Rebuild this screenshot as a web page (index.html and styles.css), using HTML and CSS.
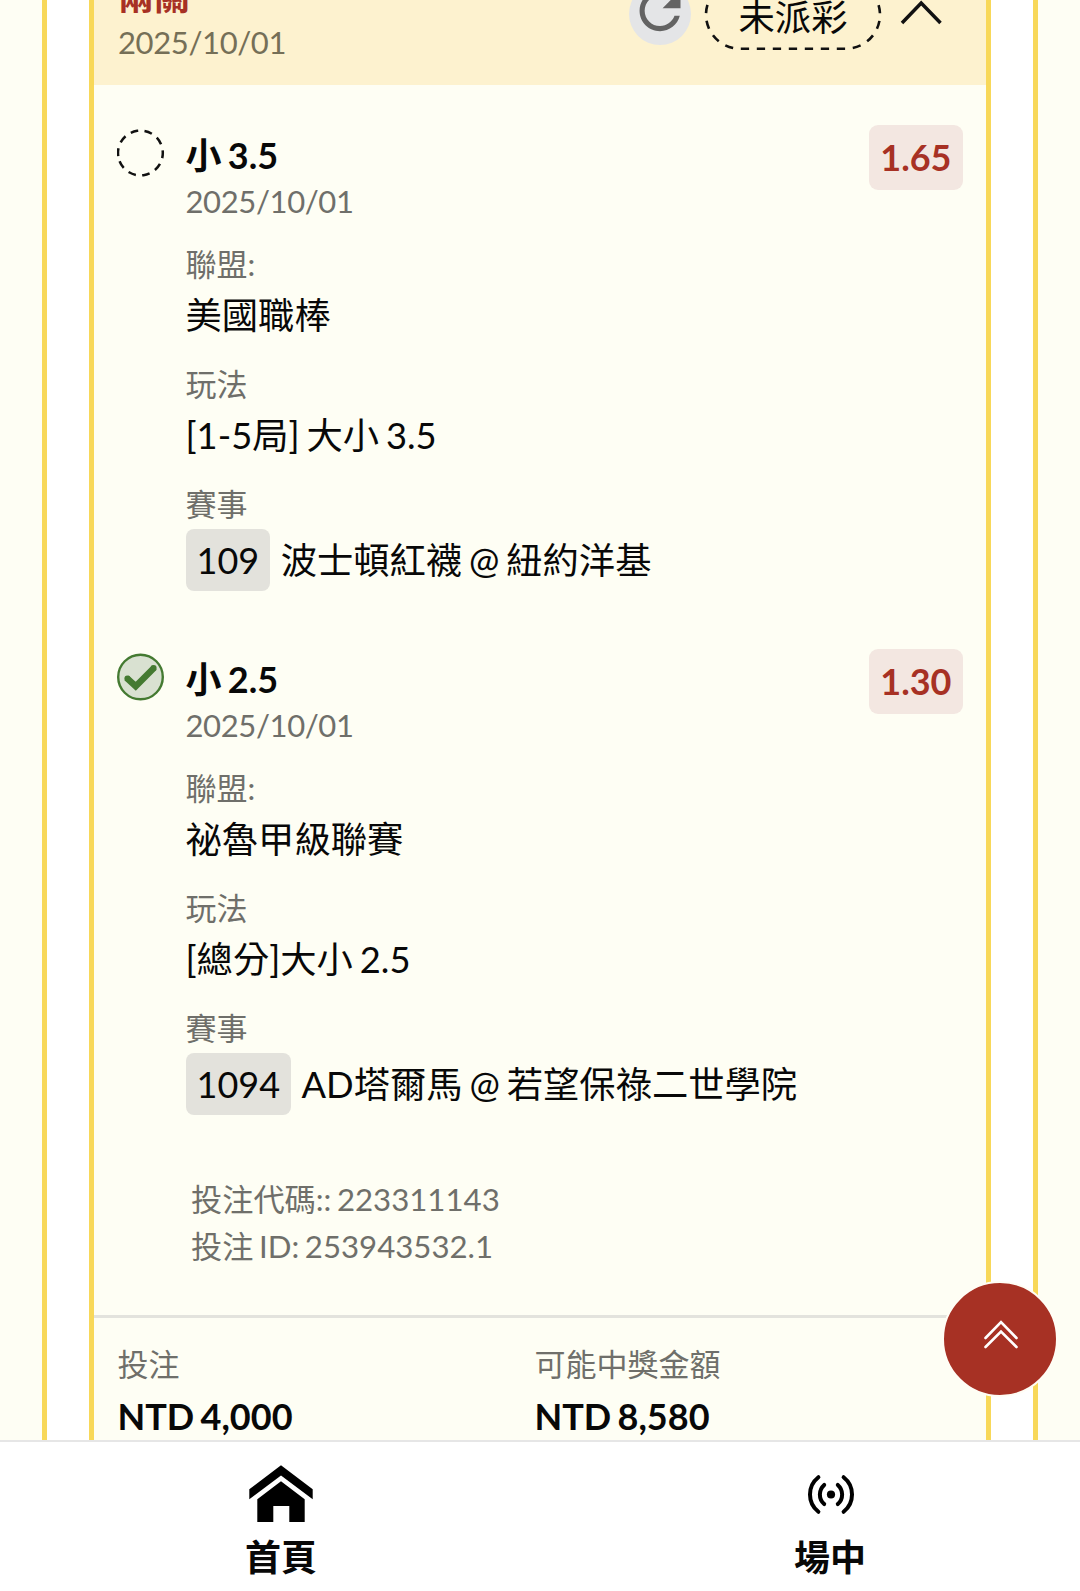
FILE: index.html
```
<!DOCTYPE html>
<html lang="zh-Hant">
<head>
<meta charset="utf-8">
<title>投注紀錄</title>
<link rel="stylesheet" href="styles.css">
</head>
<body>
<main class="page">
  <section class="panel">
    <article class="slip">
      <header class="slip-header">
        <div class="slip-heading">
          <h1 class="slip-title">兩關</h1>
          <p class="slip-date">2025/10/01</p>
        </div>
        <div class="slip-tools">
          <svg class="refresh" viewBox="0 0 62 62" aria-hidden="true">
            <circle cx="31" cy="31" r="31" fill="#e4e5e7"/>
            <path transform="translate(.3 -3) scale(2.56)" fill="#636363" d="M17.65 6.35C16.2 4.9 14.21 4 12 4c-4.42 0-7.99 3.58-7.99 8s3.57 8 7.99 8c3.73 0 6.84-2.55 7.73-6h-2.08c-.82 2.33-3.04 4-5.65 4-3.31 0-6-2.69-6-6s2.69-6 6-6c1.66 0 3.14.69 4.22 1.78L13 11h7V4z"/>
          </svg>
          <div class="status">
            <svg class="status-outline" viewBox="0 0 178 70" aria-hidden="true">
              <g fill="none" stroke="#111" stroke-width="2.6" stroke-dasharray="8.3 7.7">
                <path d="M36.8 68.7H142A34 34 0 0 0 142 .7H36"/>
                <path stroke-dashoffset="8.3" d="M36.8 68.7H36A34 34 0 0 1 36 .7"/>
              </g>
            </svg>
            <span class="status-text">未派彩</span>
          </div>
          <svg class="chevron" viewBox="0 0 44 26" aria-hidden="true">
            <path d="M3 23 22.2 3 41.5 23" fill="none" stroke="#111" stroke-width="3.5"/>
          </svg>
        </div>
      </header>

      <div class="legs">
        <section class="leg">
          <svg class="leg-icon" viewBox="0 0 48 48" aria-hidden="true">
            <circle cx="23.4" cy="24" r="22.4" fill="none" stroke="#111" stroke-width="2.5" stroke-dasharray="7.8 6.27" transform="rotate(172 23.4 24)"/>
          </svg>
          <div class="leg-body">
            <h2 class="leg-title">小 3.5</h2>
            <p class="leg-date">2025/10/01</p>
            <dl class="facts">
              <div class="fact"><dt>聯盟:</dt><dd>美國職棒</dd></div>
              <div class="fact"><dt>玩法</dt><dd>[1-5局] 大小 3.5</dd></div>
              <div class="fact"><dt>賽事</dt><dd class="match"><span class="code">109</span><span>波士頓紅襪 @ 紐約洋基</span></dd></div>
            </dl>
          </div>
          <strong class="odds">1.65</strong>
        </section>

        <section class="leg">
          <svg class="leg-icon" viewBox="0 0 48 48" aria-hidden="true">
            <circle cx="23.5" cy="24" r="22.3" fill="#d9e1d1" stroke="#447a31" stroke-width="2.4"/>
            <path d="M9.6 24.9 18.7 33.2 37.4 14.4" fill="none" stroke="#447a31" stroke-width="6.4"/>
            <circle cx="10.4" cy="25.6" r="3" fill="#447a31"/>
            <circle cx="36.6" cy="15" r="3" fill="#447a31"/>
          </svg>
          <div class="leg-body">
            <h2 class="leg-title">小 2.5</h2>
            <p class="leg-date">2025/10/01</p>
            <dl class="facts">
              <div class="fact"><dt>聯盟:</dt><dd>祕魯甲級聯賽</dd></div>
              <div class="fact"><dt>玩法</dt><dd>[總分]大小 2.5</dd></div>
              <div class="fact"><dt>賽事</dt><dd class="match"><span class="code">1094</span><span>AD塔爾馬 @ 若望保祿二世學院</span></dd></div>
            </dl>
          </div>
          <strong class="odds">1.30</strong>
        </section>
      </div>

      <div class="reference">
        <p>投注代碼:: 223311143</p>
        <p>投注 ID: 253943532.1</p>
      </div>

      <footer class="totals">
        <div class="total"><span class="total-label">投注</span><strong class="total-value">NTD 4,000</strong></div>
        <div class="total"><span class="total-label">可能中獎金額</span><strong class="total-value">NTD 8,580</strong></div>
      </footer>
    </article>
  </section>
</main>

<button class="to-top" aria-label="回到頂部">
  <svg viewBox="0 0 36 32" aria-hidden="true">
    <path d="M2.5 19 18 3 33.5 19M2.5 28 18 12.5 33.5 28" fill="none" stroke="#fff" stroke-width="2.6" stroke-linecap="round"/>
  </svg>
</button>

<nav class="tabs">
  <a class="tab">
    <svg class="tab-icon" viewBox="0 0 64 58" aria-hidden="true">
      <path d="M.3 24.3 32 .3 63.7 24.3V34.2L32 10.5.3 34.2zM8.3 34.2 32 16.2 55.7 34.2V57H40.3V41H24.3V57H8.3z"/>
    </svg>
    <span>首頁</span>
  </a>
  <a class="tab">
    <svg class="tab-icon" viewBox="0 0 64 58" aria-hidden="true">
      <circle cx="33" cy="29.5" r="4.1"/>
      <g fill="none" stroke="#000" stroke-width="4" stroke-linecap="round">
        <path d="M26.2 19.9a12.8 12.8 0 0 0 0 19.2M39.8 19.9a12.8 12.8 0 0 1 0 19.2"/>
        <path d="M20.4 12.2a22 22 0 0 0 0 34.6M45.6 12.2a22 22 0 0 1 0 34.6"/>
      </g>
    </svg>
    <span>場中</span>
  </a>
</nav>
</body>
</html>
```
FILE: styles.css
```
* { box-sizing: border-box; margin: 0; padding: 0; }

body {
  height: 1591px;
  overflow: hidden;
  display: flex;
  flex-direction: column;
  background: #fefef4;
  color: #080808;
  font-family: Lato, "Noto Sans CJK TC", sans-serif;
  font-size: 36.3px;
  word-spacing: -2.4px;
}

svg { display: block; }

.page { height: 1440px; overflow: hidden; padding: 0 42px; }

.panel {
  height: 100%;
  padding: 0 42px;
  background: #fff;
  border: solid #f8d859;
  border-width: 0 5px;
}

.slip {
  height: 1500px;
  background: #fefef4;
  border: solid #f8d859;
  border-width: 0 5px;
}

.slip-header {
  height: 85px;
  overflow: hidden;
  display: flex;
  justify-content: space-between;
  align-items: flex-end;
  padding: 0 43px 0 24px;
  background: #fdf2cf;
}

.slip-heading { padding-bottom: 19px; }
.slip-title { font-size: 36px; line-height: 46px; color: #a73124; }
.slip-date { font-size: 31px; line-height: 47px; letter-spacing: -.38px; color: #756f57; }

.slip-tools { display: flex; align-items: center; padding-bottom: 35px; }
.refresh { width: 62px; height: 62px; margin: 0 13px 3px 0; }

.status { position: relative; width: 178px; height: 70px; margin-right: 17px; }
.status-outline { position: absolute; inset: 0; width: 178px; height: 70px; }
.status-text { display: block; text-align: center; line-height: 74px; }
.chevron { width: 44px; height: 26px; margin-bottom: 4px; }

.legs {
  display: flex;
  flex-direction: column;
  gap: 58px;
  padding: 40px 23.5px 0 23px;
}

.leg {
  display: grid;
  grid-template-columns: 48px 1fr auto;
  column-gap: 20.5px;
  align-items: start;
}

.leg-icon { width: 48px; height: 48px; margin-top: 4px; }
.leg-body { padding-top: 6px; }
.leg-title { font-size: 36px; line-height: 48px; }
.leg-date { font-size: 31px; line-height: 45px; letter-spacing: -.38px; color: #6f6f6a; }

.facts { display: flex; flex-direction: column; gap: 19px; margin-top: 18px; }
.fact dt { font-size: 31px; line-height: 45px; color: #6f6f6a; }
.fact dd { line-height: 56px; }
.fact .match { display: flex; align-items: center; gap: 10.5px; margin-top: 2px; line-height: 62px; }
.code { padding: 0 11px; background: #e3e2dc; border-radius: 8px; font-size: 36px; line-height: 62px; }

.odds {
  padding: 0 11px;
  border-radius: 9px;
  background: #f3e7e1;
  color: #a73124;
  font-size: 36px;
  line-height: 65px;
}

.reference { padding: 61px 0 0 97px; font-size: 31.2px; line-height: 47px; color: #6f6f6a; }

.totals {
  display: grid;
  grid-template-columns: 417px 1fr;
  margin-top: 45px;
  padding: 24px 24px 0 23.5px;
  border-top: 3px solid #e3e3dd;
}
.total { display: flex; flex-direction: column; }
.total-label { font-size: 31px; line-height: 45px; color: #6f6f6a; }
.total-value { line-height: 59px; font-size: 36px; }

.to-top {
  position: absolute;
  left: 942px;
  top: 1281px;
  width: 116px;
  height: 116px;
  display: flex;
  justify-content: center;
  padding-top: 36px;
  border: 2px solid #fffdf5;
  border-radius: 50%;
  background: #a73124;
}
.to-top svg { width: 36px; height: 32px; margin-left: 2px; }

.tabs {
  height: 151px;
  overflow: hidden;
  display: grid;
  grid-template-columns: 549px 549px;
  padding-left: 6.5px;
  background: #fff;
  border-top: 2.5px solid #e6e6e6;
}
.tab {
  display: flex;
  flex-direction: column;
  align-items: center;
  gap: 9px;
  padding-top: 23px;
  font-size: 36px;
  font-weight: 700;
  line-height: 51px;
}
.tab-icon { width: 64px; height: 58px; }
```
